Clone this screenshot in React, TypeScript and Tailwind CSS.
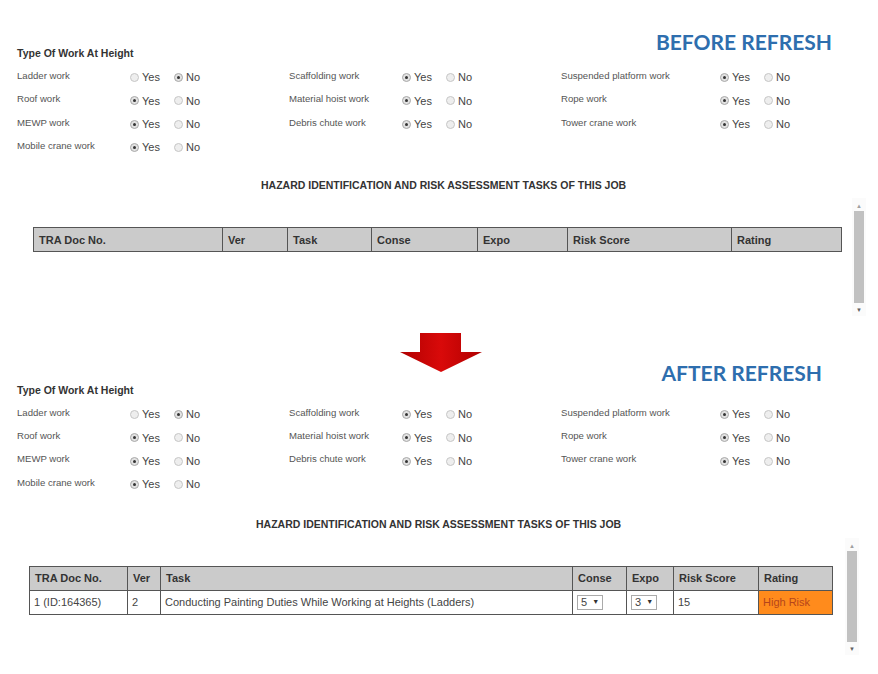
import React from "react";

type Choice = "yes" | "no";
type Work = { label: string; value: Choice };

const columns: Work[][] = [
  [
    { label: "Ladder work", value: "no" },
    { label: "Roof work", value: "yes" },
    { label: "MEWP work", value: "yes" },
    { label: "Mobile crane work", value: "yes" },
  ],
  [
    { label: "Scaffolding work", value: "yes" },
    { label: "Material hoist work", value: "yes" },
    { label: "Debris chute work", value: "yes" },
  ],
  [
    { label: "Suspended platform work", value: "yes" },
    { label: "Rope work", value: "yes" },
    { label: "Tower crane work", value: "yes" },
  ],
];

// label column is wider in the third group
const labelWidths = ["w-[113px]", "w-[113px]", "w-[159px]"];

const arial = { fontFamily: '"Liberation Sans", Arial, sans-serif' };
const lato = { fontFamily: 'Lato, "Open Sans", sans-serif' };

function Radio({ checked, text }: { checked: boolean; text: string }) {
  return (
    <span className="flex items-center w-[44px]">
      <span
        className={
          checked
            ? "w-[9px] h-[9px] rounded-full border border-[#a9a9a9] bg-[#e2e2e2] flex items-center justify-center"
            : "w-[9px] h-[9px] rounded-full border border-[#c6c6c6] bg-[#eeeeee]"
        }
      >
        {checked && <span className="w-[3px] h-[3px] rounded-full bg-[#333]" />}
      </span>
      <span className="ml-[3px] text-[11px] text-[#444]">{text}</span>
    </span>
  );
}

function WorkRow({ item, labelW }: { item: Work; labelW: string }) {
  return (
    <div className="flex items-center h-[23.33px]">
      <span className={`${labelW} text-[9.6px] text-[#555] pb-[3px] whitespace-nowrap`}>{item.label}</span>
      <Radio checked={item.value === "yes"} text="Yes" />
      <Radio checked={item.value === "no"} text="No" />
    </div>
  );
}

function WorkGrid() {
  return (
    <div className="flex pl-[17px]">
      {columns.map((col, i) => (
        <div key={i} className="w-[272px] flex flex-col">
          {col.map((w) => (
            <WorkRow key={w.label} item={w} labelW={labelWidths[i]} />
          ))}
        </div>
      ))}
    </div>
  );
}

function ScrollBar() {
  return (
    <div className="w-[14px] h-full flex flex-col items-center bg-[#fbfbfb]">
      <span className="text-[6px] leading-[8px] h-[13px] pt-[4px] text-[#a0a0a0]">▲</span>
      <div className="w-[10px] flex-1 bg-[#c1c1c1]" />
      <span className="text-[6px] leading-[8px] h-[13px] pt-[3px] text-[#606060]">▼</span>
    </div>
  );
}

function Th({ w, children }: { w: string; children: React.ReactNode }) {
  return (
    <th className={`${w} h-[24px] border border-[#555] bg-[#cbcbcb] text-left font-bold text-[11px] text-[#333] px-[5px] py-0`}>
      {children}
    </th>
  );
}

function Select({ value }: { value: string }) {
  return (
    <span className="inline-flex items-center w-[26px] h-[15px] border border-[#aaa] bg-white text-[11px] text-[#444] pl-[3px]">
      {value}
      <span className="ml-[5px] text-[7px] text-[#333]">▼</span>
    </span>
  );
}

const heading = "HAZARD IDENTIFICATION AND RISK ASSESSMENT TASKS OF THIS JOB";

export default function App() {
  return (
    <div className="w-[878px] h-[674px] bg-white overflow-hidden" style={arial}>
      {/* before refresh */}
      <div className="pt-[30px]">
        <div className="flex justify-between items-start h-[28px]">
          <span className="ml-[17px] mt-[16px] text-[10.5px] leading-[14px] font-bold text-[#333]">Type Of Work At Height</span>
          <span className="mr-[46px] mt-[1px] text-[21px] leading-[22px] font-bold text-[#2e6eae]" style={lato}>
            BEFORE REFRESH
          </span>
        </div>
        <div className="mt-[8px]">
          <WorkGrid />
        </div>
        <div className="mt-[19px] h-[14px] leading-[14px] text-[10.5px] font-bold text-[#333] pl-[261px]">{heading}</div>
        <div className="mt-[6px] h-[118px] flex">
          <div className="w-[852px] pl-[33px] pt-[29px]">
            <table className="w-[808px] border-collapse table-fixed">
              <thead>
                <tr>
                  <Th w="w-[189px]">TRA Doc No.</Th>
                  <Th w="w-[65px]">Ver</Th>
                  <Th w="w-[84px]">Task</Th>
                  <Th w="w-[106px]">Conse</Th>
                  <Th w="w-[90px]">Expo</Th>
                  <Th w="w-[164px]">Risk Score</Th>
                  <Th w="w-[110px]">Rating</Th>
                </tr>
              </thead>
            </table>
          </div>
          <ScrollBar />
        </div>
      </div>

      {/* arrow + after refresh */}
      <div className="flex items-start h-[67px]">
        <svg className="ml-[400px] mt-[17px]" width="82" height="39" viewBox="0 0 82 39">
          <defs>
            <linearGradient id="arrowFill" x1="0" y1="0" x2="1" y2="0">
              <stop offset="0" stopColor="#b00000" />
              <stop offset="0.5" stopColor="#d90a0a" />
              <stop offset="1" stopColor="#b00000" />
            </linearGradient>
          </defs>
          <polygon points="20,0 61,0 61,19 82,19 41,39 0,19 20,19" fill="url(#arrowFill)" />
        </svg>
        <span className="ml-auto mr-[56px] mt-[46px] text-[21px] leading-[22px] font-bold text-[#2e6eae]" style={lato}>
          AFTER REFRESH
        </span>
      </div>
      <div className="h-[14px] leading-[14px] ml-[17px] text-[10.5px] font-bold text-[#333]">Type Of Work At Height</div>
      <div className="mt-[5.5px]">
        <WorkGrid />
      </div>
      <div className="mt-[21px] h-[14px] leading-[14px] text-[10.5px] font-bold text-[#333] pl-[256px]">{heading}</div>
      <div className="mt-[7px] h-[117px] flex">
        <div className="w-[845px] pl-[29px] pt-[28px]">
          <table className="w-[803px] border-collapse table-fixed">
            <thead>
              <tr>
                <Th w="w-[98px]">TRA Doc No.</Th>
                <Th w="w-[33px]">Ver</Th>
                <Th w="w-[412px]">Task</Th>
                <Th w="w-[54px]">Conse</Th>
                <Th w="w-[47px]">Expo</Th>
                <Th w="w-[85px]">Risk Score</Th>
                <Th w="w-[74px]">Rating</Th>
              </tr>
            </thead>
            <tbody>
              <tr className="h-[24px] text-[11px] text-[#444]">
                <td className="border border-[#555] px-[4px] py-0 whitespace-nowrap">1 (ID:164365)</td>
                <td className="border border-[#555] px-[4px] py-0">2</td>
                <td className="border border-[#555] px-[4px] py-0 whitespace-nowrap">
                  Conducting Painting Duties While Working at Heights (Ladders)
                </td>
                <td className="border border-[#555] px-[4px] py-0">
                  <Select value="5" />
                </td>
                <td className="border border-[#555] px-[4px] py-0">
                  <Select value="3" />
                </td>
                <td className="border border-[#555] px-[4px] py-0">15</td>
                <td className="border border-[#555] px-[4px] py-0 bg-[#ff8b1c] text-[#b5451b]">High Risk</td>
              </tr>
            </tbody>
          </table>
        </div>
        <ScrollBar />
      </div>
    </div>
  );
}
